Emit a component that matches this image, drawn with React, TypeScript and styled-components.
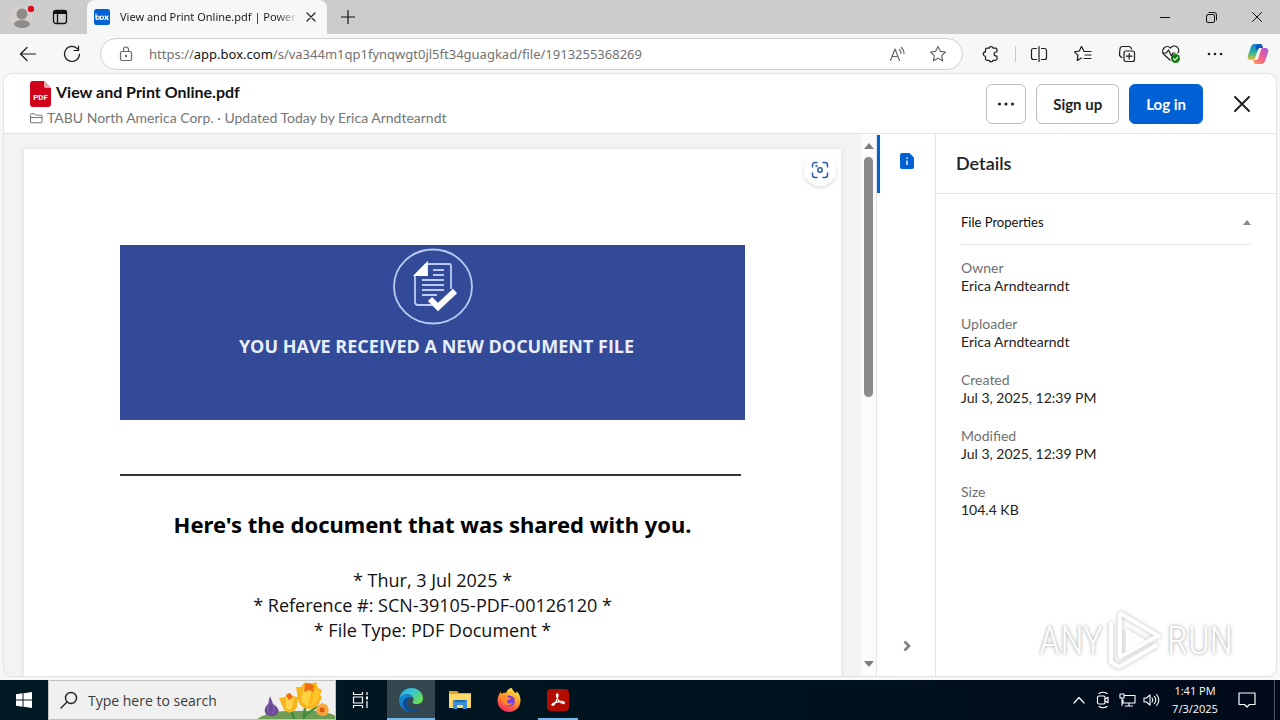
import React from 'react';
import styled, { createGlobalStyle, css } from 'styled-components';

const GlobalStyle = createGlobalStyle`
  * { box-sizing: border-box; }
  body { margin: 0; background: #f7f7f7; font-family: 'Open Sans', 'Noto Sans', sans-serif; }
  button, input { font: inherit; color: inherit; border: 0; background: none; padding: 0; margin: 0; }
  h1, h2, h3, p, dl, dt, dd { margin: 0; font-weight: 400; }
`;

const ui = "'Open Sans', 'Noto Sans', sans-serif";
const box = "Lato, 'Open Sans', sans-serif";

const Screen = styled.div`
  display: flex;
  flex-direction: column;
  height: 100vh;
  overflow: hidden;
  background: #f7f7f7;
`;

const Icon = styled.svg<{ $w?: number }>`
  display: block;
  flex: none;
  fill: none;
  stroke: currentColor;
  stroke-width: ${p => p.$w ?? 1.2};
  stroke-linecap: round;
  stroke-linejoin: round;
`;

/* Browser chrome */

const TabStrip = styled.header`
  display: flex;
  flex: none;
  height: 34px;
  padding-left: 3px;
  background: #cccccc;
`;

const StripButton = styled.button<{ $width: number }>`
  display: flex;
  align-items: center;
  justify-content: center;
  width: ${p => p.$width}px;
  color: #111;
`;

const Tab = styled.div`
  display: flex;
  align-items: center;
  width: 240px;
  margin-left: 8px;
  padding: 0 7px;
  border-radius: 8px 8px 0 0;
  background: #f7f7f7;
`;

const Favicon = styled.svg`
  flex: none;
  display: block;
`;

const TabTitle = styled.span`
  flex: 1;
  margin-left: 10px;
  white-space: nowrap;
  font-family: 'Noto Sans', 'Open Sans', sans-serif;
  font-size: 11px;
  line-height: 16px;
  color: #1b1b1b;
  mask-image: linear-gradient(90deg, #000 88%, transparent);
`;

const TabClose = styled.button`
  display: flex;
  align-items: center;
  justify-content: center;
  width: 18px;
  height: 18px;
  margin-left: 4px;
  color: #222;
`;

const WindowButtons = styled.div`
  display: flex;
  margin-left: auto;
`;

const Toolbar = styled.nav`
  display: flex;
  flex: none;
  align-items: center;
  height: 40px;
  padding: 0 1px 0 6px;
  background: #f7f7f7;
`;

const ToolButton = styled.button<{ $last?: boolean }>`
  display: flex;
  align-items: center;
  justify-content: center;
  width: ${p => (p.$last ? 42 : 44)}px;
  height: 32px;
  color: #1b1b1b;
`;

const AddressBar = styled.div`
  display: flex;
  flex: 1;
  align-items: center;
  height: 32px;
  margin: 0 6px;
  padding: 0 4px 0 17px;
  border: 1px solid #cfcfcf;
  border-radius: 16px;
  background: #fff;
  color: #6a6a6a;
`;

const Url = styled.a`
  flex: 1;
  margin-left: 15px;
  font-family: 'Noto Sans', 'Open Sans', sans-serif;
  font-size: 13px;
  line-height: 20px;
  color: #717171;
  text-decoration: none;
  white-space: nowrap;
`;

const Host = styled.span`
  color: #111;
`;

const AddressButton = styled(ToolButton)`
  width: 40px;
  height: 28px;
  color: #666;
`;

const Separator = styled.span`
  width: 1px;
  height: 16px;
  margin: 0 1px 0 2px;
  background: #c8c8c8;
`;

/* Box preview */

const Preview = styled.main`
  position: relative;
  display: flex;
  flex: 1;
  flex-direction: column;
  min-height: 0;
  margin: 0 4px 4px;
  overflow: hidden;
  border-radius: 8px;
  background: #fff;
  box-shadow: 0 0 2px #b4b4b4;
  font-family: ${box};
`;

const FileHeader = styled.div`
  display: flex;
  flex: none;
  align-items: center;
  gap: 10px;
  height: 60px;
  padding: 0 14px 0 26px;
  border-bottom: 1px solid #e4e4e4;
`;

const FileInfo = styled.div`
  flex: 1;
  padding-top: 3px;
`;

const FileTitleRow = styled.div`
  display: flex;
  align-items: center;
  gap: 5px;
  height: 26px;
`;

const FileTitle = styled.h1`
  padding-bottom: 4px;
  font-size: 16px;
  line-height: 20px;
  font-weight: 700;
  color: #111;
`;

const FileMeta = styled.div`
  display: flex;
  align-items: center;
  gap: 4px;
  height: 22px;
  font-size: 14px;
  line-height: 20px;
  color: #767676;
`;

const HeaderButton = styled.button<{ $primary?: boolean; $square?: boolean }>`
  display: flex;
  align-items: center;
  justify-content: center;
  height: 40px;
  min-width: 40px;
  padding: 0 ${p => (p.$square ? 0 : 16)}px;
  border: 1px solid #bcbcbc;
  border-radius: 6px;
  background: #fff;
  font-size: 15px;
  font-weight: 700;
  color: #222;
  ${p =>
    p.$primary &&
    css`
      border-color: #0061d5;
      background: #0061d5;
      color: #fff;
    `}
`;

const CloseButton = styled.button`
  display: flex;
  align-items: center;
  justify-content: center;
  width: 40px;
  height: 40px;
  margin-left: 9px;
  color: #222;
`;

const PreviewBody = styled.div`
  display: flex;
  flex: 1;
  min-height: 0;
`;

const Viewer = styled.section`
  flex: 1;
  min-width: 0;
  overflow: hidden;
  padding: 15px 20px 0;
  background: #f3f3f3;
`;

const Page = styled.article`
  position: relative;
  min-height: 1000px;
  padding: 96px 96px 0;
  background: #fff;
  box-shadow: 0 0 5px #dcdcdc;
  font-family: ${ui};
  text-align: center;
  color: #111;
`;

const LensButton = styled.button`
  position: absolute;
  top: 5px;
  right: 5px;
  display: flex;
  align-items: center;
  justify-content: center;
  width: 32px;
  height: 32px;
  border-radius: 50%;
  background: #fff;
  box-shadow: 0 2px 4px #ddd;
  color: #2d5cab;
`;

const Banner = styled.div`
  display: flex;
  flex-direction: column;
  align-items: center;
  gap: 6px;
  height: 175px;
  padding: 3px 0 0;
  background: #324a97;
`;

const BannerText = styled.h2`
  padding-left: 8px;
  font-size: 18px;
  line-height: 28px;
  font-weight: 700;
  color: #e8eefc;
`;

const Rule = styled.div`
  height: 2px;
  margin: 54px 4px 34px 0;
  background: #333;
`;

const DocHeading = styled.h2`
  font-family: 'Noto Sans', 'Open Sans', sans-serif;
  font-size: 22px;
  line-height: 28px;
  font-weight: 700;
  color: #000;
  white-space: nowrap;
`;

const DocLines = styled.div`
  margin-top: 30px;
  font-size: 18px;
  line-height: 25px;
`;

const ScrollBar = styled.div`
  display: flex;
  flex-direction: column;
  align-items: center;
  width: 15px;
  padding: 9px 0;
  background: #fbfbfb;
`;

const ScrollTrack = styled.div`
  flex: 1;
  width: 9px;
  margin: 8px 0 5px;
`;

const ScrollThumb = styled.div`
  height: 48%;
  border-radius: 5px;
  background: #8a8a8a;
`;

const SideNav = styled.nav`
  display: flex;
  flex-direction: column;
  justify-content: space-between;
  width: 60px;
  padding: 1px 0;
  border-left: 1px solid #e4e4e4;
  border-right: 1px solid #e4e4e4;
`;

const SideNavButton = styled.button<{ $active?: boolean }>`
  display: flex;
  align-items: center;
  justify-content: center;
  height: 58px;
  padding: 0 1px ${p => (p.$active ? 6 : 0)}px 0;
  border-left: 3px solid ${p => (p.$active ? '#0061d5' : 'transparent')};
  color: #808080;
`;

const Details = styled.aside`
  width: 340px;
`;

const DetailsHeader = styled.div`
  display: flex;
  align-items: center;
  height: 60px;
  padding: 0 20px 2px;
  border-bottom: 1px solid #e4e4e4;
`;

const DetailsTitle = styled.h2`
  font-size: 18px;
  line-height: 24px;
  font-weight: 600;
  color: #222;
`;

const Properties = styled.section`
  padding: 7px 25px 0;
`;

const SectionToggle = styled.button`
  display: flex;
  align-items: center;
  justify-content: space-between;
  width: 100%;
  height: 44px;
  padding-bottom: 1px;
  border-bottom: 1px solid #e4e4e4;
  font-size: 13px;
  line-height: 18px;
  color: #111;
`;

const PropertyList = styled.dl`
  display: flex;
  flex-direction: column;
  gap: 20px;
  padding-top: 14px;
  font-size: 14px;
  line-height: 18px;
`;

const PropertyLabel = styled.dt`
  color: #6f6f6f;
`;

const PropertyValue = styled.dd`
  color: #222;
`;

const Watermark = styled.div`
  position: absolute;
  right: 43px;
  bottom: 4px;
  display: flex;
  align-items: center;
  gap: 3px;
  font-family: 'Roboto Condensed', Roboto, sans-serif;
  font-size: 38px;
  font-weight: 300;
  line-height: 60px;
  color: #fff;
  text-shadow: 0 0 3px #b4b4b4, 0 0 4px #ccc;
  pointer-events: none;
`;

const PlayMark = styled.svg`
  display: block;
  filter: drop-shadow(0 0 2px #bbb);
`;

/* Taskbar */

const Taskbar = styled.footer`
  display: flex;
  flex: none;
  align-items: stretch;
  height: 40px;
  background: linear-gradient(90deg, #011a24, #00121e 60%, #000a1a);
  color: #fff;
`;

const TaskButton = styled.button<{ $active?: boolean; $running?: boolean; $width?: number }>`
  display: flex;
  align-items: center;
  justify-content: center;
  width: ${p => p.$width ?? 48}px;
  padding-top: ${p => (p.$active || p.$running ? 2 : 0)}px;
  background: ${p => (p.$active ? '#34474f' : 'transparent')};
  border-bottom: ${p => (p.$active || p.$running ? '2px solid #76b9ed' : '0')};
`;

const TaskApps = styled.div`
  display: flex;
  gap: 1px;
`;

const RunningApp = styled.div`
  display: flex;
  padding: 0 4px;
`;

const SearchBox = styled.label`
  display: flex;
  align-items: center;
  width: 288px;
  padding-left: 11px;
  border: 1px solid #c2c2c2;
  background: #f0f0f0;
  color: #222;
  overflow: hidden;
`;

const SearchInput = styled.input`
  flex: 1;
  min-width: 0;
  margin-left: 10px;
  font-size: 14px;
  &::placeholder {
    color: #3b3b3b;
    opacity: 1;
  }
`;

const Tray = styled.div`
  display: flex;
  align-items: center;
  margin-left: auto;
  padding-right: 5px;
`;

const TrayButton = styled.button<{ $wide?: boolean }>`
  display: flex;
  align-items: center;
  justify-content: center;
  width: ${p => (p.$wide ? 56 : 24)}px;
  height: 40px;
  border-right: ${p => (p.$wide ? '1px solid #4a5360' : '0')};
`;

const Clock = styled.time`
  width: 56px;
  margin-right: -4px;
  margin-left: 4px;
  font-size: 11px;
  line-height: 18px;
  text-align: center;
  white-space: nowrap;
`;

const properties = [
  ['Owner', 'Erica Arndtearndt'],
  ['Uploader', 'Erica Arndtearndt'],
  ['Created', 'Jul 3, 2025, 12:39 PM'],
  ['Modified', 'Jul 3, 2025, 12:39 PM'],
  ['Size', '104.4 KB'],
];

const STAR = 'M10 2.5l2.3 4.8 5.2.7-3.8 3.6.9 5.2-4.6-2.5-4.6 2.5.9-5.2L2.500 8l5.200-.7z';

function BrowserTabs() {
  return (
    <TabStrip>
      <StripButton $width={38} aria-label="Profile">
        <svg width="24" height="26" viewBox="0 0 24 26">
          <circle cx="12" cy="13" r="11" fill="#d3d0cd" />
          <circle cx="12" cy="10" r="5.500" fill="#8f8b88" />
          <ellipse cx="12" cy="20" rx="8" ry="4" fill="#8f8b88" />
          <circle cx="21" cy="5" r="3.200" fill="#e00b1c" />
        </svg>
      </StripButton>
      <StripButton $width={38} aria-label="Tab actions">
        <Icon width="16" height="16" viewBox="0 0 16 16" $w={1.3}>
          <rect x="1.500" y="1.500" width="13" height="13" rx="2.500" />
          <path d="M2 4h12M2 2.800h12" strokeWidth="2" />
          <path d="M5.500 5v9" />
        </Icon>
      </StripButton>
      <Tab>
        <Favicon width="16" height="16" viewBox="0 0 16 16">
          <rect width="16" height="16" rx="2.500" fill="#0061d5" />
          <g fill="none" stroke="#fff" strokeWidth="1.200" strokeLinecap="round">
            <path d="M2 5v4" />
            <circle cx="3.700" cy="8.700" r="1.700" />
            <circle cx="7.800" cy="8.700" r="1.700" />
            <path d="M11 7l3 3.500M14 7l-3 3.500" />
          </g>
        </Favicon>
        <TabTitle>View and Print Online.pdf | Power</TabTitle>
        <TabClose aria-label="Close tab">
          <Icon width="10" height="10" viewBox="0 0 10 10"><path d="M1 1l8 8M9 1l-8 8" /></Icon>
        </TabClose>
      </Tab>
      <StripButton $width={42} aria-label="New tab">
        <Icon width="14" height="14" viewBox="0 0 14 14"><path d="M7 .5v13M.5 7h13" /></Icon>
      </StripButton>
      <WindowButtons>
        <StripButton $width={46} aria-label="Minimize">
          <Icon width="10" height="10" viewBox="0 0 10 10" $w={1}><path d="M0 5.500h10" /></Icon>
        </StripButton>
        <StripButton $width={46} aria-label="Restore">
          <Icon width="11" height="11" viewBox="0 0 11 11" $w={1}>
            <rect x=".5" y="2.500" width="8" height="8" rx="1.500" />
            <path d="M3 .5h5a2.500 2.500 0 0 1 2.500 2.500v5" />
          </Icon>
        </StripButton>
        <StripButton $width={46} aria-label="Close window">
          <Icon width="10" height="10" viewBox="0 0 10 10" $w={1}><path d="M.5.5l9 9M9.500.5l-9 9" /></Icon>
        </StripButton>
      </WindowButtons>
    </TabStrip>
  );
}

function BrowserToolbar() {
  return (
    <Toolbar>
      <ToolButton aria-label="Back">
        <Icon width="18" height="18" viewBox="0 0 18 18"><path d="M16.500 9H1.500M8 2.500L1.500 9 8 15.500" /></Icon>
      </ToolButton>
      <ToolButton aria-label="Refresh">
        <Icon width="18" height="18" viewBox="0 0 18 18"><path d="M16.500 9A7.500 7.500 0 1 1 14.800 4.200M15.500 1v4.500H11" /></Icon>
      </ToolButton>
      <AddressBar>
        <Icon width="16" height="18" viewBox="0 0 16 18">
          <rect x="2.500" y="6.500" width="11" height="9" rx="1.500" />
          <path d="M5.500 6.300V4.500a2.500 2.500 0 0 1 5 0v1.800" />
          <circle cx="8" cy="11" r=".6" fill="currentColor" />
        </Icon>
        <Url href="#">https://<Host>app.box.com</Host>/s/va344m1qp1fynqwgt0jl5ft34guagkad/file/1913255368269</Url>
        <AddressButton aria-label="Read aloud">
          <Icon width="18" height="18" viewBox="0 0 18 18">
            <path d="M1.500 15.500L6 4l4.500 11.500M3 11.500h6M10.500 4.500a5 5 0 0 1 1.500 4M12.500 2.500a8 8 0 0 1 2.500 6" />
          </Icon>
        </AddressButton>
        <AddressButton aria-label="Add to favorites">
          <Icon width="20" height="20" viewBox="0 0 20 20"><path d={STAR} /></Icon>
        </AddressButton>
      </AddressBar>
      <ToolButton aria-label="Extensions">
        <Icon width="20" height="20" viewBox="0 0 20 20">
          <path d="M8 4.200a2.200 2.200 0 0 1 4.200 0h2.300a1.500 1.500 0 0 1 1.500 1.500V8h-.8a2 2 0 0 0 0 4h.8v2.800a1.500 1.500 0 0 1-1.500 1.500h-2.300a2.200 2.200 0 0 1-4.200 0H6a1.500 1.500 0 0 1-1.500-1.500V12.300a2.200 2.200 0 0 1 0-4.400V5.700A1.500 1.500 0 0 1 6 4.200z" />
        </Icon>
      </ToolButton>
      <Separator />
      <ToolButton aria-label="Split screen">
        <Icon width="18" height="18" viewBox="0 0 18 18">
          <path d="M9 1.500v15M6.500 3.500h-3a2 2 0 0 0-2 2v7a2 2 0 0 0 2 2h3M11.500 3.500h3a2 2 0 0 1 2 2v7a2 2 0 0 1-2 2h-3" />
        </Icon>
      </ToolButton>
      <ToolButton aria-label="Favorites">
        <Icon width="20" height="20" viewBox="0 0 20 20">
          <path d="M11 7.200L8.500 2.500 6.300 7l-4.800.8 3.500 3.500-.8 5.200L8.500 14M11 7.500h7M12 11h6M11 14.500h7" />
        </Icon>
      </ToolButton>
      <ToolButton aria-label="Collections">
        <Icon width="18" height="18" viewBox="0 0 18 18">
          <rect x="6" y="6" width="10.500" height="10.500" rx="2" />
          <path d="M11.200 8.500v5.500M8.500 11.200H14M4 12.500A3.500 3.500 0 0 1 1.500 9L2 4a2.500 2.500 0 0 1 2.500-2.500h6A3 3 0 0 1 13.500 4" />
        </Icon>
      </ToolButton>
      <ToolButton aria-label="Browser essentials">
        <Icon width="20" height="20" viewBox="0 0 20 20">
          <path d="M9 16L3 10.500A4.500 4.500 0 0 1 9.500 4 4.500 4.500 0 0 1 17 9M1.500 9h4l2-3 3 6 1.500-3h2" />
          <circle cx="14.500" cy="14.500" r="4.500" fill="#107c10" stroke="none" />
          <path d="M12.500 14.700l1.500 1.500 2.700-3" stroke="#fff" />
        </Icon>
      </ToolButton>
      <ToolButton aria-label="Settings and more">
        <Icon width="16" height="4" viewBox="0 0 16 4">
          <g fill="currentColor" stroke="none"><circle cx="2" cy="2" r="1.300" /><circle cx="8" cy="2" r="1.300" /><circle cx="14" cy="2" r="1.300" /></g>
        </Icon>
      </ToolButton>
      <ToolButton $last aria-label="Copilot">
        <svg width="22" height="22" viewBox="0 0 22 22">
          <defs>
            <linearGradient id="cpA" x1="0" y1="0" x2="0" y2="1">
              <stop offset="0" stopColor="#1b79d8" /><stop offset=".5" stopColor="#22b39a" /><stop offset="1" stopColor="#f0c430" />
            </linearGradient>
            <linearGradient id="cpB" x1="1" y1="0" x2="0" y2="1">
              <stop offset="0" stopColor="#a65ce6" /><stop offset=".5" stopColor="#ee5f91" /><stop offset="1" stopColor="#ff9a4d" />
            </linearGradient>
          </defs>
          <path d="M13 1H7.500C5 1 4 3.500 3.200 6L1 12.500C0 16 1.500 17 4 17h2c1.500 0 2-1 2.500-3l2-6.500c.6-2 1.300-2.500 3-2.500h2L15 2.500C14.600 1.500 14 1 13 1z" fill="url(#cpA)" />
          <path d="M12 1h1.500c1.500 0 2 1.500 2.500 4h-3c-1.500 0-2 1-2.500 2.500L10 9 9 5c-.5-2 .8-4 3-4z" fill="#1553bd" />
          <path d="M9 21h5.500c2.500 0 3.500-2.500 4.300-5L21 9.500C22 6 20.500 5 18 5h-2c-1.500 0-2 1-2.500 3l-2 6.500c-.6 2-1.300 2.500-3 2.500h-2L7 19.500c.4 1 1 1.500 2 1.500z" fill="url(#cpB)" />
        </svg>
      </ToolButton>
    </Toolbar>
  );
}

function FileBar() {
  return (
    <FileHeader>
      <FileInfo>
        <FileTitleRow>
          <svg width="21" height="26" viewBox="0 0 21 26" role="img" aria-label="PDF file">
            <path d="M3 0h11l7 7v16a3 3 0 0 1-3 3H3a3 3 0 0 1-3-3V3a3 3 0 0 1 3-3z" fill="#d0021b" />
            <path d="M14 0l7 7h-5a2 2 0 0 1-2-2z" fill="#f0a5ad" />
            <text x="10.500" y="18.500" fontSize="8" fontWeight="700" fontFamily="Roboto, sans-serif" fill="#fff" textAnchor="middle">PDF</text>
          </svg>
          <FileTitle>View and Print Online.pdf</FileTitle>
        </FileTitleRow>
        <FileMeta>
          <Icon width="13" height="12" viewBox="0 0 13 12" $w={1}>
            <path d="M.5 10V2.500a.8.800 0 0 1 .8-.8h3.200l1.300 1.500h5.400a.8.800 0 0 1 .8.800v6a.8.800 0 0 1-.8.800H1.300A.8.800 0 0 1 .5 10zM.5 5.500H12" />
          </Icon>
          <span>TABU North America Corp. · Updated Today by Erica Arndtearndt</span>
        </FileMeta>
      </FileInfo>
      <HeaderButton $square aria-label="More options">
        <svg width="18" height="4" viewBox="0 0 18 4" fill="#222"><circle cx="2.500" cy="2" r="1.600" /><circle cx="9" cy="2" r="1.600" /><circle cx="15.500" cy="2" r="1.600" /></svg>
      </HeaderButton>
      <HeaderButton>Sign up</HeaderButton>
      <HeaderButton $primary>Log in</HeaderButton>
      <CloseButton aria-label="Close">
        <Icon width="16" height="16" viewBox="0 0 16 16" $w={2}><path d="M1 1l14 14M15 1L1 15" /></Icon>
      </CloseButton>
    </FileHeader>
  );
}

function DocumentPage() {
  return (
    <Viewer>
      <Page>
        <LensButton aria-label="Visual search">
          <Icon width="18" height="18" viewBox="0 0 18 18" $w={1.5}>
            <path d="M1.500 6V4a2.500 2.500 0 0 1 2.500-2.500h2M12 1.500h2A2.500 2.500 0 0 1 16.500 4v2M16.500 12v2a2.500 2.500 0 0 1-2.500 2.500h-2M6 16.500H4A2.500 2.500 0 0 1 1.500 14v-2" />
            <circle cx="9" cy="9" r="2.200" />
            <circle cx="5.500" cy="5.200" r=".4" />
          </Icon>
        </LensButton>
        <Banner>
          <svg width="82" height="78" viewBox="0 0 82 78" fill="none" stroke="#b9cbf5" strokeWidth="1.800">
            <ellipse cx="41" cy="38.500" rx="39" ry="37" />
            <path d="M35 16h22q2 0 2 2v23M48 57H26q-3 0-3-3V28" />
            <path d="M35 15v12H23z" fill="#fff" stroke="#fff" />
            <path d="M41 22h11M41 27h11M30 32h22M30 37h22M30 42h22M30 47h15" />
            <path d="M38 51l8 8 17-16" stroke="#fff" strokeWidth="6" />
          </svg>
          <BannerText>YOU HAVE RECEIVED A NEW DOCUMENT FILE</BannerText>
        </Banner>
        <Rule />
        <DocHeading>Here's the document that was shared with you.</DocHeading>
        <DocLines>
          <p>* Thur, 3 Jul 2025 *</p>
          <p>* Reference #: SCN-39105-PDF-00126120 *</p>
          <p>* File Type: PDF Document *</p>
        </DocLines>
      </Page>
    </Viewer>
  );
}

function DetailsPanel() {
  return (
    <Details>
      <DetailsHeader><DetailsTitle>Details</DetailsTitle></DetailsHeader>
      <Properties>
        <SectionToggle aria-expanded="true">
          File Properties
          <svg width="8" height="5" viewBox="0 0 8 5" fill="#8a8a8a"><path d="M4 0l4 5H0z" /></svg>
        </SectionToggle>
        <PropertyList>
          {properties.map(([label, value]) => (
            <div key={label}>
              <PropertyLabel>{label}</PropertyLabel>
              <PropertyValue>{value}</PropertyValue>
            </div>
          ))}
        </PropertyList>
      </Properties>
    </Details>
  );
}

function Flowers() {
  return (
    <svg width="78" height="38" viewBox="0 0 78 38">
      <path d="M0 38c14-9 28-8 40-8s28-2 40 6v2z" fill="#6f9c56" />
      <path d="M47 38c-1-6 1-8 1-11M37 38c-1-6-3-8-5-12M47 36c5-6 9-6 13-11" stroke="#3d8f3c" strokeWidth="2.500" fill="none" />
      <path d="M13 15l3 8c6 4 7 7 4 10-4 4-11 2-12-2-1-3 1-6 3-8z" fill="#6c4a96" />
      <path d="M13 20c-3 5-3 9 0 13M15 22c4 5 2 8 0 11" stroke="#8e6cb8" fill="none" />
      <path d="M22 17l6-1 3-4 4 3 6 1-1 10c-2 6-9 7-13 3z" fill="#f9b51b" />
      <path d="M29 16l0 12 5 1 3-12z" fill="#ffd44a" />
      <path d="M39 6l5 0 4-5 5 2 6-2 2 6 4 2-2 5 2 2c-3 9-8 12-13 12-6 0-11-5-11-10z" fill="#f9b51b" />
      <path d="M47 5l-3 15 7 6 4-17z" fill="#ffd23e" />
      <path d="M58 9l-5 17 7-5 3-11z" fill="#ffc62c" />
      <path d="M48 3l5-1 4 3-1 6-4-2-5 2zM29 14l4-2 3 4-4 3z" fill="#f06b12" />
      <path d="M60 25l5-3 5 2 2 5-2 5-5 1-5-2-1-5z" fill="#f6a83c" />
      <circle cx="65" cy="29" r="2.500" fill="#d85a14" />
    </svg>
  );
}

function WindowsTaskbar() {
  return (
    <Taskbar>
      <TaskButton aria-label="Start">
        <svg width="16" height="16" viewBox="0 0 16 16" fill="#fff"><path d="M0 2.200L6.500 1.300v6.200H0zM7.500 1.200L16 0v7.500H7.500zM0 8.500h6.500v6.200L0 13.800zM7.500 8.500H16V16l-8.500-1.200z" /></svg>
      </TaskButton>
      <SearchBox>
        <Icon width="18" height="18" viewBox="0 0 18 18" $w={1.4}><circle cx="11" cy="7" r="5.500" /><path d="M7 11L1 17" /></Icon>
        <SearchInput placeholder="Type here to search" aria-label="Type here to search" />
        <Flowers />
      </SearchBox>
      <TaskApps>
        <TaskButton $width={50} aria-label="Task view">
          <Icon width="18" height="16" viewBox="0 0 18 16" $w={1.2}>
            <path d="M1.500 0v2.500h9V0M1.500 16v-2.500h9V16M1.500 5h9v6h-9zM15 0v3M15 9v7" strokeLinecap="butt" />
            <path d="M14 4.500h2v3h-2z" fill="#fff" stroke="none" />
          </Icon>
        </TaskButton>
        <TaskButton $active aria-label="Microsoft Edge">
          <svg width="24" height="24" viewBox="0 0 24 24">
            <defs>
              <linearGradient id="edA" x1="0" y1="0" x2="1" y2=".6"><stop offset="0" stopColor="#2aa9e8" /><stop offset=".5" stopColor="#35c6d0" /><stop offset="1" stopColor="#69dc55" /></linearGradient>
              <linearGradient id="edB" x1="0" y1="0" x2="1" y2="1"><stop offset="0" stopColor="#1690dc" /><stop offset="1" stopColor="#0d56a8" /></linearGradient>
            </defs>
            <path d="M.3 10.500C1.500 4.500 6.200 0 12.200 0 19 0 24 4.800 24 10.300c0 3.500-2.800 5.900-6.200 5.900-3 0-4.300-1.100-4.300-1.900 0-.6 1-1.200 1-3 0-2.600-2.700-5-6.200-5-3.600 0-6.400 1.800-8 4.200z" fill="url(#edA)" />
            <path d="M.2 10.800C1.500 7.500 4.900 6.200 8 6.200c3.400 0 6.400 2.200 6.500 5-.3-.6-1.400-1.600-2.900-1.600-2 0-3.700 2.400-3.700 5 0 4.300 3.900 7.500 8.300 7.500 2.200 0 4.200-.9 5.600-1.900C19.800 22.600 16 24 12.100 24 5.300 24 0 18.600 0 12.500z" fill="url(#edB)" />
            <path d="M7.900 14.500c0-2.400 1.700-4.900 3.700-4.900-4-1.300-7.800 2.500-7.500 6.500.3 4.100 4 7.900 9 7.900 4 0 7.500-2 9-4.300-6 4.300-14.200 1-14.200-5.200z" fill="#104b91" />
          </svg>
        </TaskButton>
        <TaskButton aria-label="File Explorer">
          <svg width="22" height="20" viewBox="0 0 22 20">
            <path d="M0 1h8l2 2h12v14H0z" fill="#e3a52c" />
            <path d="M0 4h22v14H0z" fill="#ffd867" />
            <path d="M4 10h14v9h-4v-4H8v4H4z" fill="#3a8fd6" />
            <path d="M6 10h10v2H6z" fill="#1d6bb0" />
          </svg>
        </TaskButton>
        <TaskButton aria-label="Firefox">
          <svg width="24" height="24" viewBox="0 0 24 24">
            <defs><linearGradient id="ffA" x1=".8" y1="0" x2=".3" y2="1"><stop offset="0" stopColor="#fff04a" /><stop offset=".45" stopColor="#ff9a2a" /><stop offset="1" stopColor="#f4245f" /></linearGradient></defs>
            <path d="M15 0c0 2 2 3 3.500 5 1-.2 1.200-1 1-2 3 3 4 6 4 9.500C23.500 19 18.500 24 12 24S.5 19 .5 12.500C.5 9 2 6 4 3.500c0 1.200.2 1.800.6 2.300C6 4.800 7.500 4.500 9 5c1.500-3.500 3-4.500 6-5z" fill="url(#ffA)" />
            <circle cx="12.200" cy="13" r="5.600" fill="#7a3ee0" />
            <path d="M4 8c3-2 6-.5 7.500 1.500 1 .2 2 .5 2.500 1-1 1.500-4 1-4 3 0 2 4 3 6 1-2 4-9 4-10.500-.5C5 12 4 10 4 8z" fill="#ff8a27" />
          </svg>
        </TaskButton>
        <RunningApp>
          <TaskButton $running $width={40} aria-label="Adobe Acrobat">
            <svg width="22" height="22" viewBox="0 0 22 22">
              <rect width="22" height="22" rx="4" fill="#b30b00" />
              <path d="M10.500 5c-1.500 0-1 3 .5 5.500 1.500 2.500 4 4 5.500 4 1.500-.2 1-2-2-2-3.500 0-9 1.500-9.500 3-.2 1.500 2 1 3.500-2 1.500-3 3.500-8.500 2-8.500z" fill="none" stroke="#fff" strokeWidth="1.300" />
            </svg>
          </TaskButton>
        </RunningApp>
      </TaskApps>
      <Tray>
        <TrayButton aria-label="Show hidden icons">
          <Icon width="12" height="8" viewBox="0 0 12 8"><path d="M1 7l5-5.500L11 7" /></Icon>
        </TrayButton>
        <TrayButton aria-label="Meet now">
          <Icon width="14" height="18" viewBox="0 0 14 18">
            <rect x="1.500" y="5" width="7.500" height="8" rx="1.500" />
            <path d="M9 8l3-1.700v5.400L9 10M3 2.500Q7 0 11 2.500M3 15.500q4 2.500 8 0" />
          </Icon>
        </TrayButton>
        <TrayButton aria-label="Network">
          <Icon width="17" height="16" viewBox="0 0 17 16" $w={1.1}>
            <path d="M6 3.500h10v7.500H4V8M10 11v3M6.500 14h7M1 2h4v4H1zM3 6v7.500" />
          </Icon>
        </TrayButton>
        <TrayButton aria-label="Volume">
          <Icon width="17" height="14" viewBox="0 0 17 14" $w={1.1}>
            <path d="M1 5h2.500L7 1.800v10.400L3.500 9H1zM9 5q1.500 2 0 4M11.300 3.300q3 3.700 0 7.400M13.600 1.500q4.400 5.500 0 11" />
          </Icon>
        </TrayButton>
        <Clock>1:41 PM<br />7/3/2025</Clock>
        <TrayButton $wide aria-label="Notifications">
          <Icon width="18" height="16" viewBox="0 0 18 16"><path d="M1 1h16v11.500h-5.500L9 15l-2.500-2.500H1z" /></Icon>
        </TrayButton>
      </Tray>
    </Taskbar>
  );
}

export default function App() {
  return (
    <Screen>
      <GlobalStyle />
      <BrowserTabs />
      <BrowserToolbar />
      <Preview>
        <FileBar />
        <PreviewBody>
          <DocumentPage />
          <ScrollBar>
            <svg width="10" height="6" viewBox="0 0 10 6" fill="#7d7d7d"><path d="M5 0l5 6H0z" /></svg>
            <ScrollTrack><ScrollThumb /></ScrollTrack>
            <svg width="10" height="6" viewBox="0 0 10 6" fill="#7d7d7d"><path d="M5 6L0 0h10z" /></svg>
          </ScrollBar>
          <SideNav>
            <SideNavButton $active aria-label="Details">
              <svg width="14" height="16" viewBox="0 0 14 16">
                <path d="M2 0h7.500L14 4.500V14a2 2 0 0 1-2 2H2a2 2 0 0 1-2-2V2a2 2 0 0 1 2-2z" fill="#0061d5" />
                <path d="M7 7.500V12M7 4.500v1.500" stroke="#fff" strokeWidth="1.400" />
              </svg>
            </SideNavButton>
            <SideNavButton aria-label="Collapse sidebar">
              <Icon width="8" height="12" viewBox="0 0 8 12" $w={2.6}><path d="M1.500 1.500L6 6l-4.500 4.500" strokeLinecap="butt" strokeLinejoin="miter" /></Icon>
            </SideNavButton>
          </SideNav>
          <DetailsPanel />
        </PreviewBody>
        <Watermark>
          <span>ANY</span>
          <PlayMark width="58" height="62" viewBox="0 0 58 62" fill="none" stroke="#fff" strokeWidth="4" strokeLinejoin="round">
            <path d="M14 3v44l39-22M14 3l40 24" />
            <path d="M5 12v40l8 5 38-22" />
            <path d="M20 19v22l19-11z" fill="#fff" strokeWidth="1" />
          </PlayMark>
          <span>RUN</span>
        </Watermark>
      </Preview>
      <WindowsTaskbar />
    </Screen>
  );
}
